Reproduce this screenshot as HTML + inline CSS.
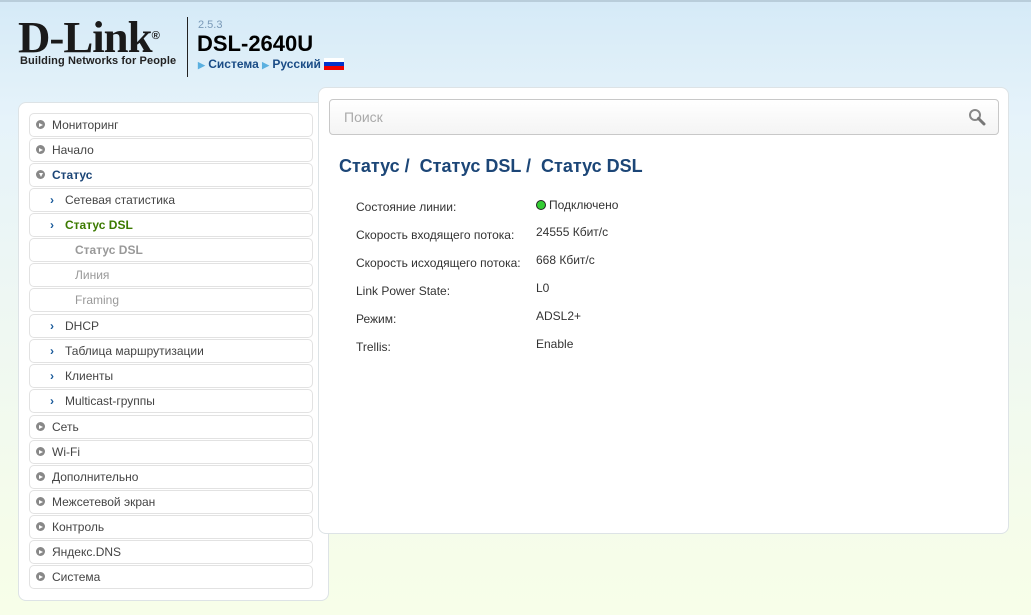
<!DOCTYPE html>
<html><head><meta charset="utf-8"><style>
*{margin:0;padding:0;box-sizing:border-box}
body{width:1031px;height:615px;overflow:hidden;font-family:"Liberation Sans",Arial,sans-serif;background:linear-gradient(#d5eaf7 0px,#e6f3fa 120px,#eef7f3 300px,#f6fde9 560px,#f7fee9 615px);position:relative}
.abs{position:absolute}
.topline{left:0;top:0;width:1031px;height:2px;background:#b9cdda}
.logo{left:18px;top:18px;font-family:"Liberation Serif",serif;font-weight:bold;font-size:44px;color:#1a1a1a;letter-spacing:-1px;line-height:40px;transform:scaleX(1.02);transform-origin:left}
.tag{left:20px;top:55px;font-size:11px;font-weight:bold;color:#222;letter-spacing:0.1px}
.vline{left:187px;top:17px;width:1px;height:60px;background:#222}
.ver{left:198px;top:19px;font-size:11px;color:#7a9ab8}
.model{left:197px;top:31px;font-size:22px;font-weight:bold;color:#000}
.nav{left:198px;top:57px;font-size:12px;font-weight:bold;color:#1a4c86}
.nav i{color:#5ab0e0;font-style:normal;font-size:9px}
.left{left:18px;top:102px;width:311px;height:499px;background:#fff;border:1px solid #dde3e6;border-radius:8px}
.item{position:absolute;left:10px;width:284px;height:24px;border:1px solid #e2e2e2;border-radius:5px;font-size:12px;color:#444;line-height:22px;padding-left:22px}
.item .b{position:absolute;left:6px;top:6px;width:9px;height:9px;border-radius:50%;background:#888}
.item .b:after{content:"";position:absolute;left:3px;top:2.5px;border-left:4px solid #fff;border-top:2px solid transparent;border-bottom:2px solid transparent}
.item .b.d:after{left:2.5px;top:3px;border-top:4px solid #fff;border-left:2px solid transparent;border-right:2px solid transparent;border-bottom:0}
.sub{padding-left:35px}
.sub .a{position:absolute;left:20px;top:0;color:#1a5a9a;font-size:12px;font-weight:bold}
.sub2{padding-left:45px;color:#999;}
.right{left:318px;top:87px;width:691px;height:447px;background:#fff;border:1px solid #dde3e6;border-radius:8px}
.search{position:absolute;left:10px;top:11px;width:670px;height:36px;border:1px solid #c8c8c8;border-radius:4px;background:linear-gradient(#fff,#f4f4f4);font-size:14px;color:#aaa;line-height:34px;padding-left:14px}
.title{position:absolute;left:20px;top:68px;font-size:18px;font-weight:bold;color:#1c4677}
.row{position:absolute;font-size:12px;color:#333}
</style></head><body>
<div class="abs topline"></div>
<div class="abs logo">D-Link<sup style="font-family:'Liberation Sans';font-size:11px;vertical-align:top;position:relative;top:-2px">®</sup></div>
<div class="abs tag">Building Networks for People</div>
<div class="abs vline"></div>
<div class="abs ver">2.5.3</div>
<div class="abs model">DSL-2640U</div>
<div class="abs nav"><i>▶</i> Система <i>▶</i> Русский <span style="display:inline-block;width:20px;height:12px;vertical-align:-2px;background:linear-gradient(#fff 0 33%,#0033cc 33% 66%,#e00 66%)"></span></div>

<div class="abs left">
<div class="item" style="top:10px"><span class="b"></span>Мониторинг</div>
<div class="item" style="top:35px"><span class="b"></span>Начало</div>
<div class="item" style="top:60px;color:#1c4677;font-weight:bold"><span class="b d"></span>Статус</div>
<div class="item sub" style="top:85px"><span class="a">›</span>Сетевая статистика</div>
<div class="item sub" style="top:110px;color:#3c7a00;font-weight:bold"><span class="a">›</span>Статус DSL</div>
<div class="item sub2" style="top:135px;font-weight:bold">Статус DSL</div>
<div class="item sub2" style="top:160px">Линия</div>
<div class="item sub2" style="top:185px">Framing</div>
<div class="item sub" style="top:211px"><span class="a">›</span>DHCP</div>
<div class="item sub" style="top:236px"><span class="a">›</span>Таблица маршрутизации</div>
<div class="item sub" style="top:261px"><span class="a">›</span>Клиенты</div>
<div class="item sub" style="top:286px"><span class="a">›</span>Multicast-группы</div>
<div class="item" style="top:312px"><span class="b"></span>Сеть</div>
<div class="item" style="top:337px"><span class="b"></span>Wi-Fi</div>
<div class="item" style="top:362px"><span class="b"></span>Дополнительно</div>
<div class="item" style="top:387px"><span class="b"></span>Межсетевой экран</div>
<div class="item" style="top:412px"><span class="b"></span>Контроль</div>
<div class="item" style="top:437px"><span class="b"></span>Яндекс.DNS</div>
<div class="item" style="top:462px"><span class="b"></span>Система</div>
</div>

<div class="abs right">
<div class="search">Поиск
<svg style="position:absolute;right:12px;top:8px" width="18" height="18" viewBox="0 0 18 18"><circle cx="7" cy="7" r="5" fill="none" stroke="#888" stroke-width="2"/><path d="M10.5 10.5 L16 16" stroke="#777" stroke-width="3" stroke-linecap="round"/></svg></div>
<div class="title">Статус / &nbsp;Статус DSL / &nbsp;Статус DSL</div>
<div class="row" style="left:37px;top:112px">Состояние линии:</div>
<div class="row" style="left:217px;top:110px"><span style="display:inline-block;width:10px;height:10px;border-radius:50%;background:#3c3;border:1px solid #222;vertical-align:-1px;margin-right:3px"></span>Подключено</div>
<div class="row" style="left:37px;top:140px">Скорость входящего потока:</div>
<div class="row" style="left:217px;top:137px">24555 Кбит/с</div>
<div class="row" style="left:37px;top:168px">Скорость исходящего потока:</div>
<div class="row" style="left:217px;top:165px">668 Кбит/с</div>
<div class="row" style="left:37px;top:196px">Link Power State:</div>
<div class="row" style="left:217px;top:193px">L0</div>
<div class="row" style="left:37px;top:224px">Режим:</div>
<div class="row" style="left:217px;top:221px">ADSL2+</div>
<div class="row" style="left:37px;top:252px">Trellis:</div>
<div class="row" style="left:217px;top:249px">Enable</div>
</div>
</body></html>
